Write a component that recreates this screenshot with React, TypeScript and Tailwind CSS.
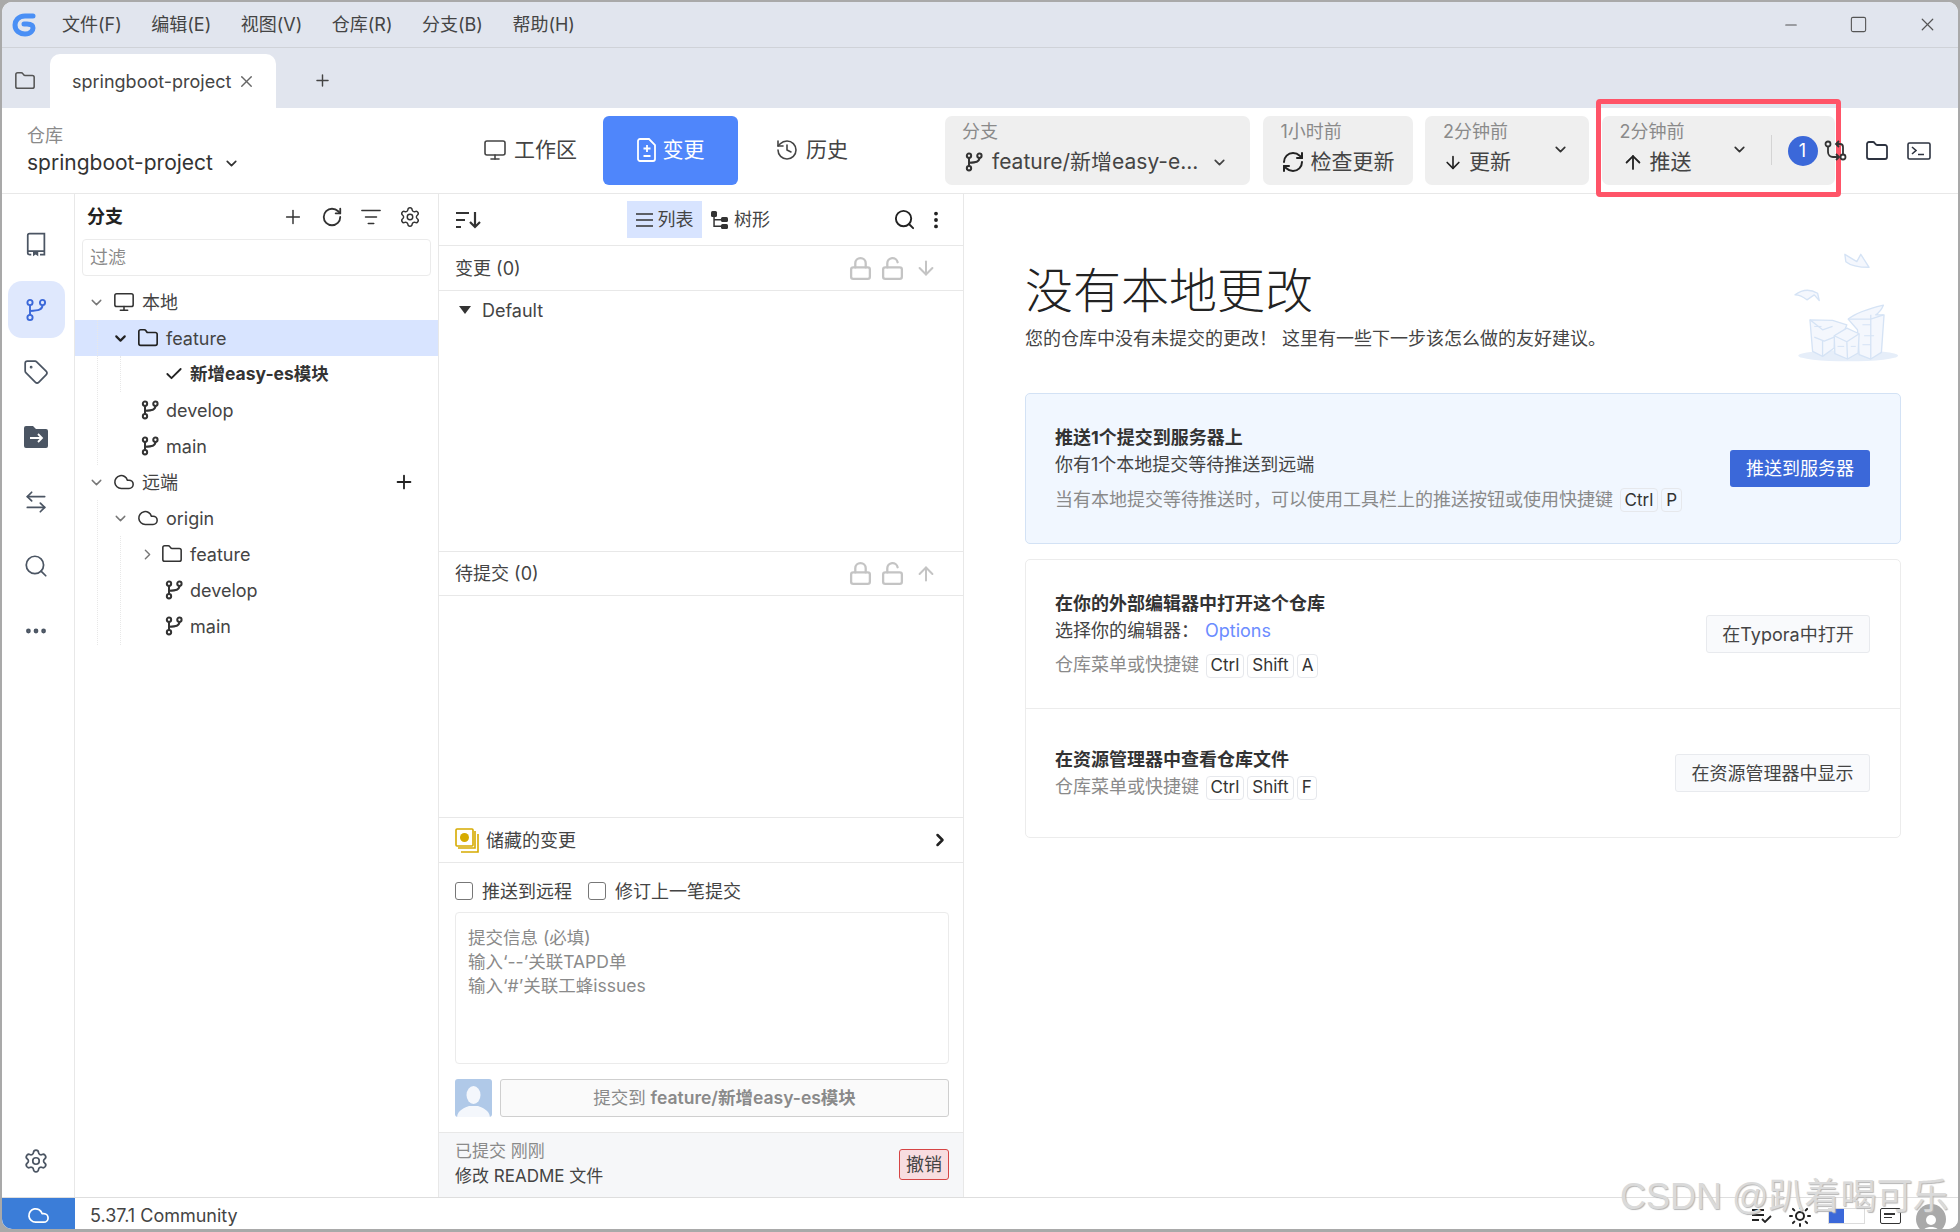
import type { ReactNode } from 'react'
import {
  ArrowDown,
  ArrowLeftRight,
  ArrowUp,
  Check,
  ChevronDown,
  ChevronRight,
  Cloud,
  Ellipsis,
  EllipsisVertical,
  Folder,
  History,
  ListFilter,
  Lock,
  LockOpen,
  Minus,
  Monitor,
  Plus,
  RefreshCw,
  RotateCw,
  Search,
  Settings,
  Square,
  Sun,
  Tag,
  X,
} from 'lucide-react'

function BranchIcon({ className, weight = 2.4 }: { className?: string; weight?: number }) {
  return (
    <svg className={className} viewBox="0 0 24 24" fill="none" stroke="currentColor" strokeWidth={weight}>
      <circle cx="6" cy="4.5" r="2.6" />
      <circle cx="6" cy="19.5" r="2.6" />
      <circle cx="18.5" cy="4.5" r="2.6" />
      <path d="M6 7v10M18.5 7c0 5-4 5.500-12.500 6" />
    </svg>
  )
}

function BookIcon() {
  return (
    <svg className="w-[21px] h-[26px] text-[#4b5563]" viewBox="0 0 24 28" fill="none" stroke="currentColor" strokeWidth="2">
      <path d="M2 24V4a2 2 0 0 1 2-2h17v24h-5M2 24a2 2 0 0 0 2 2h2M2 22h19" />
      <path d="M8 22h6v6l-3-2-3 2z" fill="currentColor" stroke="none" />
    </svg>
  )
}

function FolderArrowIcon() {
  return (
    <svg className="w-[24px] h-[22px]" viewBox="0 0 24 22">
      <path d="M0 2a2 2 0 0 1 2-2h7l3 3h10a2 2 0 0 1 2 2v15a2 2 0 0 1-2 2H2a2 2 0 0 1-2-2z" fill="#4b5563" />
      <path d="M6 12h12M14 8l4 4-4 4" fill="none" stroke="#fff" strokeWidth="1.8" />
    </svg>
  )
}

function SortIcon() {
  return (
    <svg className="w-[25px] h-[18px] text-[#333]" viewBox="0 0 25 18" fill="none" stroke="currentColor" strokeWidth="2.2">
      <path d="M0 2h13M0 9h9M0 16h5M19 1v15M14 11l5 5 5-5" />
    </svg>
  )
}

function TreeIcon() {
  return (
    <svg className="w-[17px] h-[18px] text-[#333]" viewBox="0 0 17 18" fill="currentColor">
      <rect x="0" y="0" width="6" height="6" rx="1.500" />
      <rect x="10" y="6" width="7" height="5" rx="1.500" />
      <rect x="10" y="13" width="7" height="5" rx="1.500" />
      <path d="M2.300 5h1.500v3H11v1.500H3.800v5H11V16H2.300z" />
    </svg>
  )
}

function StashIcon() {
  return (
    <svg className="w-[24px] h-[25px]" viewBox="0 0 24 25" fill="none" stroke="#d6ab00" strokeWidth="1.6">
      <rect x="1" y="1" width="17" height="17" rx="1" />
      <circle cx="9.500" cy="9.500" r="4.500" fill="#d6ab00" stroke="none" />
      <path d="M20 3v17H3M23 6v18H6" />
    </svg>
  )
}

function PullRequestIcon() {
  return (
    <svg className="z-10 ml-[6px] w-[24px] h-[24px] text-[#333]" viewBox="0 0 24 24" fill="none" stroke="currentColor" strokeWidth="1.8">
      <circle cx="4" cy="5" r="2.500" />
      <path d="M4 7.500V13a5 5 0 0 0 5 5h6M12 15l3 3-3 3" />
      <circle cx="19" cy="18" r="2.500" />
      <path d="M19 15.500V8a3 3 0 0 0-3-3h-3M15 2l-3 3 3 3" />
    </svg>
  )
}

function TerminalIcon() {
  return (
    <svg className="ml-[18px] w-[24px] h-[18px] text-[#2d3340]" viewBox="0 0 24 18" fill="none" stroke="currentColor" strokeWidth="1.6">
      <rect x="1" y="1" width="22" height="16" rx="1.500" />
      <path d="M5 5l4 3.500-4 3.500M11 12.500h6" />
    </svg>
  )
}

function PileIllustration() {
  return (
    <svg className="w-[107px] h-[113px]" viewBox="110 60 320 340" fill="#f4f7fd" stroke="#d5e3f5" strokeWidth="4" strokeLinejoin="round">
      <ellipse cx="272" cy="378" rx="150" ry="17" fill="#e6eef9" stroke="none" />
      <path d="M262 73l3 22q20 17 70 17l-25-39-12 22z" />
      <path d="M112 195q33-25 68-5l5 22-15-17-22 15q-18-15-36-15z" />
      <path d="M272 268q28-23 106-42-8 19-23 29l25 0-8 113-32 20-35-13-5-75z" />
      <path d="M157 270l68 2 43 13-6 15-30 18-2 37-35 25-30-15z" />
      <path d="M230 318l38-23 37 17-3 58-32 18-38-16z" />
      <path d="M272 268l68 0 38-13M340 255l0 133M230 318l38 18 37-24M268 336l2 52M157 270l38 30 30-10M170 322l30 12 30-12M195 334l0 46" fill="none" />
      <path d="M315 285h25M320 318h30M315 345h25M170 290h22M240 350h20M280 350h15" fill="none" strokeWidth="3" />
    </svg>
  )
}

function Label({ children }: { children: ReactNode }) {
  return <div className="text-[18px] leading-[24px] text-[#8a8a8a]">{children}</div>
}

function ToolBox({ className, children }: { className: string; children: ReactNode }) {
  return <div className={`h-[69px] rounded-[7px] bg-[#efefef] pt-[4px] shrink-0 ${className}`}>{children}</div>
}

function Key({ children }: { children: ReactNode }) {
  return (
    <span className="inline-flex h-[24px] items-center rounded-[4px] border border-[#e6e8ec] px-[4px] text-[17px] text-[#333] mx-[1.5px]">
      {children}
    </span>
  )
}

function RowChevron({ open, dark }: { open?: boolean; dark?: boolean }) {
  const cls = dark ? 'w-[17px] h-[17px] text-[#222] shrink-0' : 'w-[17px] h-[17px] text-[#777] shrink-0'
  return open ? <ChevronDown className={cls} strokeWidth={dark ? 3 : 2} /> : <ChevronRight className={cls} strokeWidth={2} />
}

function TreeRow({ className, children }: { className: string; children: ReactNode }) {
  return <div className={`flex h-9 items-center text-[18px] text-[#444] ${className}`}>{children}</div>
}

function LeafRow({ name, className }: { name: string; className: string }) {
  return (
    <TreeRow className={className}>
      <BranchIcon className="w-[20px] h-[24px] text-[#333]" />
      <span className="ml-[6px]">{name}</span>
    </TreeRow>
  )
}

function ChangeHeader({ title, up, className }: { title: string; up?: boolean; className: string }) {
  return (
    <div className={`flex items-center pl-[16px] pr-[26px] border-[#e8e8e8] text-[18px] text-[#444] ${className}`}>
      <span>{title}</span>
      <div className="ml-auto flex items-center gap-[7px] text-[#c4c4c4]">
        <Lock className="w-[25px] h-[25px]" strokeWidth={2.2} />
        <LockOpen className="w-[25px] h-[25px]" strokeWidth={2.2} />
        {up ? <ArrowUp className="ml-[3px] w-[22px] h-[22px]" strokeWidth={2.2} /> : <ArrowDown className="ml-[3px] w-[22px] h-[22px]" strokeWidth={2.2} />}
      </div>
    </div>
  )
}

export default function App() {
  return (
    <div className="relative w-[1960px] h-[1232px] overflow-hidden bg-[#a9a9a9] pl-[2px] pr-[2px] pt-[2px] pb-[3px] font-[Inter,'Noto_Sans_CJK_SC',sans-serif] text-[#333]">
      <div className="flex h-full flex-col overflow-hidden rounded-[10px] bg-white">
        {/* title bar */}
        <div className="flex h-[46px] shrink-0 items-center border-b border-[#cfd2d8] bg-[#e1e5ee] pl-[9px] text-[18px] text-[#444]">
          <svg className="w-[26px] h-[27px]" viewBox="11 10 26 27" fill="none">
            <path d="M33 15H25C18 15 15 20 15 24C15 30 20 33 25 33C31 33 33 29 33 27C33 24 30 23 27 23H24" stroke="#4a8ff5" strokeWidth="5" strokeLinecap="round" />
          </svg>
          <div className="ml-[25px] flex gap-[29.5px]">
            <span>文件(F)</span>
            <span>编辑(E)</span>
            <span>视图(V)</span>
            <span>仓库(R)</span>
            <span>分支(B)</span>
            <span>帮助(H)</span>
          </div>
          <div className="ml-auto flex items-center gap-[49px] pr-[20px] text-[#555]">
            <Minus className="w-[18px] h-[18px]" strokeWidth={1.5} />
            <Square className="w-[19px] h-[19px]" strokeWidth={1.4} />
            <X className="w-[21px] h-[21px]" strokeWidth={1.4} />
          </div>
        </div>

        {/* tabs */}
        <div className="flex h-[60px] shrink-0 items-end bg-[#e1e5ee]">
          <div className="flex h-full w-[48px] items-center pl-[12px] pt-[5px]">
            <Folder className="w-[22px] h-[22px] text-[#555]" strokeWidth={1.7} />
          </div>
          <div className="flex h-[54px] w-[226px] items-center rounded-t-[10px] bg-white pl-[22px] text-[18px] text-[#444]">
            springboot-project
            <X className="ml-[6px] w-[19px] h-[19px] text-[#666]" strokeWidth={1.7} />
          </div>
          <div className="flex h-full items-center pl-[37px] pt-[5px]">
            <Plus className="w-[19px] h-[19px] text-[#444]" strokeWidth={1.8} />
          </div>
        </div>

        {/* toolbar */}
        <div className="flex h-[86px] shrink-0 items-center border-b border-[#e8e8e8] pl-[25px]">
          <div className="w-[443px] shrink-0">
            <Label>仓库</Label>
            <div className="mt-[1px] flex items-center text-[21px] leading-[28px] text-[#333]">
              springboot-project
              <ChevronDown className="ml-[10px] w-[17px] h-[17px]" strokeWidth={2.4} />
            </div>
          </div>
          <div className="flex h-[69px] w-[133px] shrink-0 items-center gap-[7px] pb-[2px] pl-[13px] text-[21px] text-[#444]">
            <Monitor className="w-[24px] h-[24px]" strokeWidth={1.6} />
            工作区
          </div>
          <div className="flex h-[69px] w-[135px] shrink-0 items-center justify-center gap-[6px] rounded-[6px] bg-[#4f86fb] pb-[2px] text-[21px] text-white">
            <svg className="w-[20px] h-[24px]" viewBox="0 0 20 24" fill="none" stroke="currentColor" strokeWidth="1.8">
              <path d="M3 1h9l6 6v14a2 2 0 0 1-2 2H3a2 2 0 0 1-2-2V3a2 2 0 0 1 2-2zM10 7v7M6.500 10.500h7M6.500 18h7" />
            </svg>
            变更
          </div>
          <div className="flex h-[69px] w-[139px] shrink-0 items-center gap-[7px] pb-[2px] pl-[37px] text-[21px] text-[#444]">
            <History className="w-[24px] h-[24px]" strokeWidth={1.6} />
            历史
          </div>
          <div className="ml-[68px] flex items-center gap-[12.5px]">
            <ToolBox className="w-[305px] pl-[17px]">
              <Label>分支</Label>
              <div className="mt-[6px] flex items-center text-[21px] leading-[24px] text-[#444]">
                <BranchIcon className="ml-[2px] w-[20px] h-[22px] text-[#333]" />
                <span className="ml-[8px]">feature/新增easy-e...</span>
                <ChevronDown className="ml-[13px] w-[17px] h-[17px]" strokeWidth={2.4} />
              </div>
            </ToolBox>
            <ToolBox className="w-[150px] pl-[18px]">
              <Label>1小时前</Label>
              <div className="mt-[6px] flex items-center text-[21px] leading-[24px] text-[#444]">
                <RefreshCw className="w-[24px] h-[24px] text-[#222]" strokeWidth={2} />
                <span className="ml-[6px] whitespace-nowrap">检查更新</span>
              </div>
            </ToolBox>
            <ToolBox className="relative w-[164px] pl-[18px]">
              <Label>2分钟前</Label>
              <div className="mt-[6px] flex items-center text-[21px] leading-[24px] text-[#444]">
                <ArrowDown className="w-[20px] h-[21px] text-[#222]" />
                <span className="ml-[6px]">更新</span>
              </div>
              <ChevronDown className="absolute right-[20px] top-[25px] w-[17px] h-[17px]" strokeWidth={2.4} />
            </ToolBox>
            <ToolBox className="relative w-[233px] pl-[18px]">
              <Label>2分钟前</Label>
              <div className="mt-[6px] flex items-center text-[21px] leading-[24px] text-[#444]">
                <ArrowUp className="ml-[2px] w-[22px] h-[23px] text-[#222]" />
                <span className="ml-[6px]">推送</span>
              </div>
              <ChevronDown className="absolute left-[129px] top-[25px] w-[17px] h-[17px]" strokeWidth={2.4} />
              <div className="absolute left-[169px] top-[19px] h-[30px] w-px bg-[#d4d4d4]" />
            </ToolBox>
          </div>
          <div className="flex items-center">
            <div className="ml-[-47px] z-10 flex h-[30px] w-[30px] items-center justify-center rounded-full bg-[#3b68d9] text-[18px] text-white">1</div>
            <PullRequestIcon />
            <Folder className="ml-[17px] w-[24px] h-[24px] text-[#2d3340]" strokeWidth={1.8} />
            <TerminalIcon />
          </div>
        </div>

        {/* main */}
        <div className="flex min-h-0 flex-1">
          {/* rail */}
          <div className="flex w-[73px] shrink-0 flex-col items-center border-r border-[#e8e8e8] pr-[4px] pt-[37px] text-[#4b5563]">
            <BookIcon />
            <div className="mt-[24px] flex h-[57px] w-[57px] items-center justify-center rounded-[14px] bg-[#dfe8fd]">
              <BranchIcon className="w-[24px] h-[26px] text-[#3b68d9]" weight={1.9} />
            </div>
            <Tag className="mt-[21px] w-[26px] h-[26px]" strokeWidth={1.6} />
            <div className="mt-[40px] flex h-[24px] items-center"><FolderArrowIcon /></div>
            <ArrowLeftRight className="mt-[40px] w-[26px] h-[26px]" strokeWidth={1.6} />
            <Search className="mt-[38px] w-[26px] h-[26px]" strokeWidth={1.6} />
            <Ellipsis className="mt-[39px] w-[26px] h-[26px]" strokeWidth={2.4} />
            <Settings className="mt-auto mb-[23px] w-[26px] h-[26px]" strokeWidth={1.6} />
          </div>

          {/* branch panel */}
          <div className="relative w-[364px] shrink-0 border-r border-[#e8e8e8]">
            <div className="flex h-[45px] items-center pl-[12px] pr-[17px]">
              <span className="text-[18px] font-bold text-[#222]">分支</span>
              <div className="ml-auto flex items-center gap-[17px] text-[#333]">
                <Plus className="w-[22px] h-[22px]" strokeWidth={1.6} />
                <RotateCw className="w-[22px] h-[22px]" strokeWidth={2} />
                <ListFilter className="w-[22px] h-[22px]" strokeWidth={1.6} />
                <Settings className="w-[22px] h-[22px]" strokeWidth={1.6} />
              </div>
            </div>
            <div className="mx-[7px] flex h-[37px] items-center rounded-[4px] border border-[#ebebeb] pl-[7px] text-[18px] text-[#8a8a8a]">过滤</div>
            <div className="mt-[8px]">
              <TreeRow className="pl-[13px]">
                <RowChevron open />
                <Monitor className="ml-[8px] w-[22px] h-[22px] text-[#333]" strokeWidth={1.7} />
                <span className="ml-[7px]">本地</span>
              </TreeRow>
              <TreeRow className="pl-[37px] bg-[#d8e4ff]">
                <RowChevron open dark />
                <Folder className="ml-[8px] w-[22px] h-[22px] text-[#222]" strokeWidth={1.8} />
                <span className="ml-[7px]">feature</span>
              </TreeRow>
              <TreeRow className="pl-[89px]">
                <Check className="w-[20px] h-[20px] text-[#222]" strokeWidth={2.2} />
                <span className="ml-[6px] text-[17.5px] font-bold text-[#333]">新增easy-es模块</span>
              </TreeRow>
              <LeafRow name="develop" className="pl-[65px]" />
              <LeafRow name="main" className="pl-[65px]" />
              <TreeRow className="pl-[13px]">
                <RowChevron open />
                <Cloud className="ml-[8px] w-[22px] h-[22px] text-[#333]" strokeWidth={1.7} />
                <span className="ml-[7px]">远端</span>
                <Plus className="ml-auto mr-[23px] w-[22px] h-[22px] text-[#222]" strokeWidth={2} />
              </TreeRow>
              <TreeRow className="pl-[37px]">
                <RowChevron open />
                <Cloud className="ml-[8px] w-[22px] h-[22px] text-[#333]" strokeWidth={1.7} />
                <span className="ml-[7px]">origin</span>
              </TreeRow>
              <TreeRow className="pl-[64px]">
                <RowChevron />
                <Folder className="ml-[5px] w-[22px] h-[22px] text-[#333]" strokeWidth={1.7} />
                <span className="ml-[7px]">feature</span>
              </TreeRow>
              <LeafRow name="develop" className="pl-[89px]" />
              <LeafRow name="main" className="pl-[89px]" />
            </div>
            <div className="absolute left-[22px] top-[126px] h-[145px] border-l border-dotted border-[#e8e8e8]" />
            <div className="absolute left-[22px] top-[306px] h-[145px] border-l border-dotted border-[#e8e8e8]" />
            <div className="absolute left-[45px] top-[162px] h-[36px] border-l border-dotted border-[#e8e8e8]" />
            <div className="absolute left-[45px] top-[342px] h-[109px] border-l border-dotted border-[#e8e8e8]" />
          </div>

          {/* changes panel */}
          <div className="flex w-[525px] shrink-0 flex-col border-r border-[#e8e8e8]">
            <div className="flex h-[52px] shrink-0 items-center border-b border-[#e8e8e8] pl-[17px] pr-[16px]">
              <SortIcon />
              <div className="ml-[146px] flex h-[37px] w-[75px] items-center justify-center gap-[5px] bg-[#d8e4ff] text-[18px] text-[#444]">
                <svg className="w-[17px] h-[14px]" viewBox="0 0 17 14" fill="none" stroke="#333" strokeWidth="1.6"><path d="M0 1h17M0 7h17M0 13h17" /></svg>
                列表
              </div>
              <div className="ml-[9px] flex items-center gap-[6px] text-[18px] text-[#444]">
                <TreeIcon />
                树形
              </div>
              <Search className="ml-auto w-[23px] h-[23px] text-[#222]" strokeWidth={2} />
              <EllipsisVertical className="ml-[9px] w-[22px] h-[22px] text-[#222]" strokeWidth={2.2} />
            </div>
            <ChangeHeader title="变更 (0)" className="h-[45px] shrink-0 border-b" />
            <div className="flex h-[38px] shrink-0 items-center pl-[20px] text-[18px] text-[#444]">
              <span className="h-0 w-0 border-x-[6px] border-t-[8px] border-x-transparent border-t-[#333]" />
              <span className="ml-[11px]">Default</span>
            </div>
            <div className="min-h-0 flex-1" />
            <ChangeHeader title="待提交 (0)" up className="h-[45px] shrink-0 border-y" />
            <div className="h-[221px] shrink-0" />
            <div className="flex h-[46px] shrink-0 items-center border-y border-[#e8e8e8] pl-[16px] pr-[13px] text-[18px] text-[#444]">
              <StashIcon />
              <span className="ml-[7px]">储藏的变更</span>
              <ChevronRight className="ml-auto w-[20px] h-[20px] text-[#222]" strokeWidth={3} />
            </div>
            <div className="flex h-[49px] shrink-0 items-center pl-[16px] pt-[7px] text-[18px] text-[#444]">
              <span className="h-[18px] w-[18px] rounded-[3px] border-[1.5px] border-[#777]" />
              <span className="ml-[9px]">推送到远程</span>
              <span className="ml-[16px] h-[18px] w-[18px] rounded-[3px] border-[1.5px] border-[#777]" />
              <span className="ml-[9px]">修订上一笔提交</span>
            </div>
            <div className="ml-[16px] mr-[14px] h-[152px] shrink-0 rounded-[4px] border border-[#ebebeb] pl-[12px] pt-[13px] text-[17.5px] leading-[24px] text-[#8a8a8a]">
              <div>提交信息 (必填)</div>
              <div>输入‘--’关联TAPD单</div>
              <div>输入‘#’关联工蜂issues</div>
            </div>
            <div className="ml-[16px] mr-[14px] mt-[15px] flex h-[38px] shrink-0 gap-[8px]">
              <div className="flex h-[38px] w-[37px] shrink-0 items-end justify-center overflow-hidden rounded-[3px] bg-[#b0c9e8]">
                <svg className="w-[33px] h-[32px]" viewBox="0 0 33 32" fill="#f4f7fc">
                  <ellipse cx="16.500" cy="10" rx="7" ry="9" />
                  <path d="M0 32c1-7 7-9 12-11h9c5 2 11 4 12 11z" />
                </svg>
              </div>
              <div className="flex flex-1 items-center justify-center rounded-[3px] border border-[#cfcfcf] bg-[#fafafa] text-[17.5px] text-[#8a8a8a]">
                提交到&nbsp;<span className="font-semibold">feature/新增easy-es模块</span>
              </div>
            </div>
            <div className="mt-[15px] flex h-[65px] shrink-0 items-center border-t border-[#e8e8e8] bg-[#f6f7f9] pb-[2px] pl-[16px] pr-[14px] text-[17px] leading-[25px]">
              <div>
                <div className="text-[#8a8a8a]">已提交 刚刚</div>
                <div className="text-[#444]">修改 README 文件</div>
              </div>
              <div className="ml-auto flex h-[31px] w-[50px] items-center justify-center rounded-[3px] border border-[#d64545] bg-[#f8dde0] text-[18px] text-[#444]">撤销</div>
            </div>
          </div>

          {/* content */}
          <div className="min-w-0 flex-1 pl-[61px] pr-[57px]">
            <div className="flex h-[199px] items-start justify-between">
              <div className="pt-[67px]">
                <h1 className="text-[48px] leading-[60px] font-light text-[#222]">没有本地更改</h1>
                <p className="mt-[6px] text-[18px] leading-[24px] text-[#444]">您的仓库中没有未提交的更改！ 这里有一些下一步该怎么做的友好建议。</p>
              </div>
              <div className="pt-[56px]">
                <PileIllustration />
              </div>
            </div>
            <div className="flex h-[151px] items-center rounded-[5px] border border-[#d3e2f5] bg-[#f1f7ff] pl-[29px] pr-[30px]">
              <div className="pb-[1px] text-[18px] leading-[27px]">
                <div className="font-bold text-[#333]">推送1个提交到服务器上</div>
                <div className="text-[#444]">你有1个本地提交等待推送到远端</div>
                <div className="mt-[8px] flex items-center text-[#8a8a8a]">
                  当有本地提交等待推送时，可以使用工具栏上的推送按钮或使用快捷键
                  <span className="ml-[5px]"><Key>Ctrl</Key><Key>P</Key></span>
                </div>
              </div>
              <div className="ml-auto flex h-[37px] w-[140px] items-center justify-center rounded-[3px] bg-[#3b68d9] text-[18px] text-white">推送到服务器</div>
            </div>
            <div className="mt-[15px] rounded-[5px] border border-[#ececec]">
              <div className="flex h-[149px] items-center border-b border-[#ececec] pl-[29px] pr-[30px]">
                <div className="text-[18px] leading-[27px]">
                  <div className="font-bold text-[#333]">在你的外部编辑器中打开这个仓库</div>
                  <div className="text-[#444]">选择你的编辑器：<span className="ml-[6px] text-[#6b8cff]">Options</span></div>
                  <div className="mt-[7px] flex items-center text-[#8a8a8a]">
                    仓库菜单或快捷键
                    <span className="ml-[5px]"><Key>Ctrl</Key><Key>Shift</Key><Key>A</Key></span>
                  </div>
                </div>
                <div className="ml-auto flex h-[38px] w-[164px] items-center justify-center rounded-[3px] border border-[#e8eaee] bg-[#f9fafc] text-[18px] text-[#444]">在Typora中打开</div>
              </div>
              <div className="flex h-[128px] items-center pl-[29px] pr-[30px]">
                <div className="text-[18px] leading-[27px]">
                  <div className="font-bold text-[#333]">在资源管理器中查看仓库文件</div>
                  <div className="flex items-center text-[#8a8a8a]">
                    仓库菜单或快捷键
                    <span className="ml-[5px]"><Key>Ctrl</Key><Key>Shift</Key><Key>F</Key></span>
                  </div>
                </div>
                <div className="ml-auto flex h-[38px] w-[195px] items-center justify-center rounded-[3px] border border-[#e8eaee] bg-[#f9fafc] text-[18px] text-[#444]">在资源管理器中显示</div>
              </div>
            </div>
          </div>
        </div>

        {/* status bar */}
        <div className="flex h-[32px] shrink-0 items-center border-t border-[#dedede] bg-white text-[18px] text-[#444]">
          <div className="flex h-full w-[73px] items-center justify-center bg-[#3b7dd8] pt-[4px]">
            <Cloud className="w-[23px] h-[23px] text-white" strokeWidth={1.8} />
          </div>
          <span className="ml-[15px] mt-[4px]">5.37.1 Community</span>
          <div className="ml-auto mt-[4px] flex items-center pr-[12px]">
            <svg className="w-[20px] h-[14px]" viewBox="0 0 20 14" fill="none" stroke="#222" strokeWidth="1.8">
              <path d="M0 1h12M0 6h12M0 11h7M10 10l3 3 6-6" />
            </svg>
            <Sun className="ml-[16px] w-[24px] h-[24px] text-[#222]" strokeWidth={2} />
            <div className="ml-[16px] flex h-[16px] w-[37px] border border-[#dcdcdc]">
              <div className="h-full w-[15px] bg-[#3b68d9]" />
            </div>
            <div className="ml-[15px] flex h-[16px] w-[21px] flex-col justify-center gap-[2px] rounded-[2px] border-[1.5px] border-[#333] pl-[3px]">
              <div className="h-[1.5px] w-[11px] bg-[#333]" />
              <div className="h-[1.5px] w-[8px] bg-[#333]" />
            </div>
            <div className="ml-[15px] mt-[6px] flex h-[30px] w-[30px] items-end justify-center overflow-hidden rounded-full bg-[#a9a9a9]">
              <svg className="w-[20px] h-[22px]" viewBox="0 0 20 22" fill="#fff">
                <circle cx="10" cy="8" r="5" />
                <path d="M1 22c1-6 5-7 9-7s8 1 9 7z" />
              </svg>
            </div>
          </div>
        </div>
      </div>

      {/* highlight + watermark lie over everything */}
      <div className="pointer-events-none absolute left-[1596px] top-[99px] h-[98px] w-[245px] rounded-[4px] border-[5px] border-[#ff5468]" />
      <div className="pointer-events-none absolute left-[1620px] top-[1175px] whitespace-nowrap font-['Liberation_Sans','Noto_Sans_CJK_SC',sans-serif] text-[36px] leading-[44px] text-[#dadada] [text-shadow:1px_1px_1px_#b5b5b5]">
        CSDN @趴着喝可乐
      </div>
    </div>
  )
}
